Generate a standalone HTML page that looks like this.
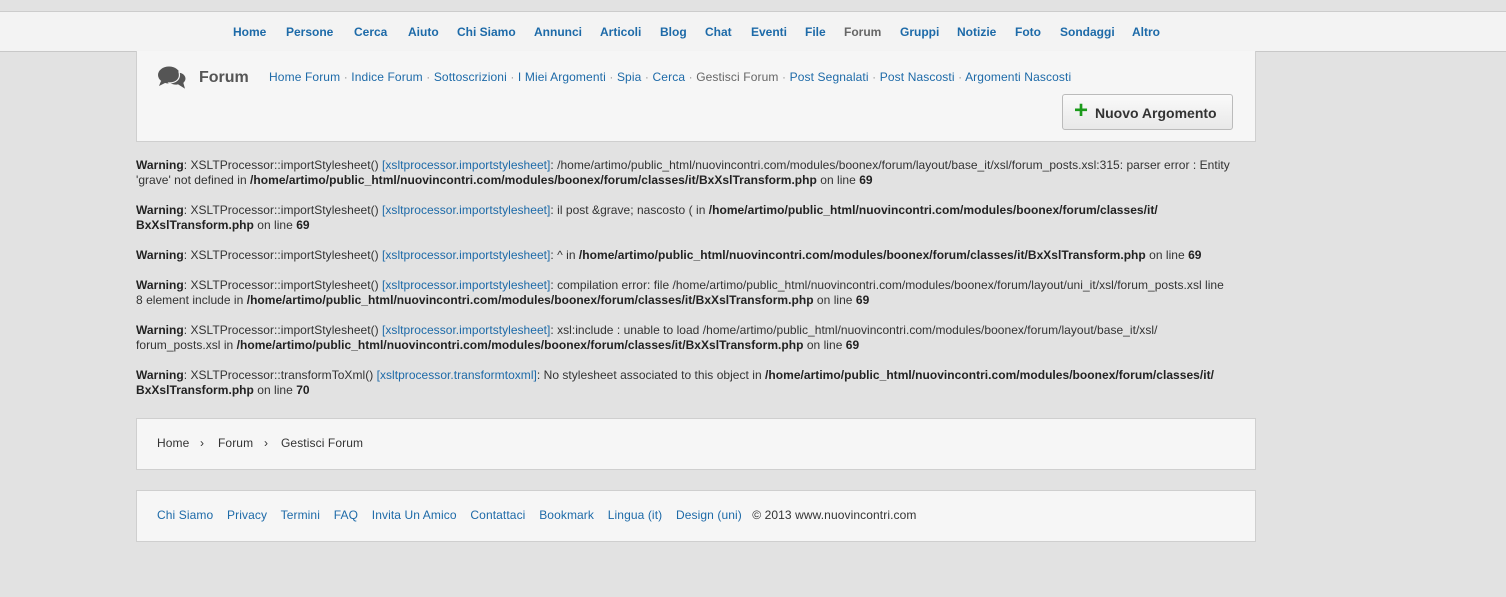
<!DOCTYPE html>
<html><head><meta charset="utf-8"><style>
body{margin:0;width:1506px;height:597px;background:#e2e2e2;font-family:"Liberation Sans",Arial,sans-serif;position:relative;overflow:hidden;color:#333}
a{color:#1d6aa8;text-decoration:none}
.top{position:absolute;left:0;top:11px;width:1506px;height:39px;background:#f3f3f3;border-top:1px solid #ccc;border-bottom:1px solid #c8c8c8}
.nav{position:absolute;top:13px;font-size:12px;font-weight:bold;color:#1d6aa8}
.box{position:absolute;left:136px;width:1118px;background:#f6f6f6;border:1px solid #cfcfcf}
.sub{position:absolute;left:269px;top:70px;font-size:12px;color:#1d6aa8;white-space:nowrap;letter-spacing:0.12px}
.sub .d{color:#999}
.warn{position:absolute;left:136px;font-size:12px;line-height:15px;color:#333;letter-spacing:0.03px;white-space:nowrap}
.warn b{color:#222}
.btn{position:absolute;left:1062px;top:94px;width:171px;height:36px;border:1px solid #bbb;border-radius:3px;background:linear-gradient(#fafafa,#e8e8e8);font-size:14px;font-weight:bold;color:#333;box-sizing:border-box}
.foot{font-size:12px;position:absolute;white-space:nowrap;letter-spacing:0.1px}
.bc span{display:inline-block}
</style></head><body>
<div class="top">
<span class="nav" style="left:233px">Home</span><span class="nav" style="left:286px">Persone</span><span class="nav" style="left:354px">Cerca</span><span class="nav" style="left:408px">Aiuto</span><span class="nav" style="left:457px">Chi Siamo</span><span class="nav" style="left:534px">Annunci</span><span class="nav" style="left:600px">Articoli</span><span class="nav" style="left:660px">Blog</span><span class="nav" style="left:705px">Chat</span><span class="nav" style="left:751px">Eventi</span><span class="nav" style="left:805px">File</span><span class="nav" style="left:844px;color:#666">Forum</span><span class="nav" style="left:900px">Gruppi</span><span class="nav" style="left:957px">Notizie</span><span class="nav" style="left:1015px">Foto</span><span class="nav" style="left:1060px">Sondaggi</span><span class="nav" style="left:1132px">Altro</span>
</div>
<div class="box" style="top:51px;height:90px;border-top:none"></div>
<svg style="position:absolute;left:157px;top:65px" width="31" height="26" viewBox="0 0 31 26"><ellipse cx="12" cy="10" rx="11" ry="8.5" fill="#555"/><path d="M4 16 L2 21 L10 17Z" fill="#555"/><path d="M22 7 C29 8 31 14 27 18 L29 25 L21 20 C17 21 13 19 12 18 C19 18 24 14 22 7Z" fill="#555" stroke="#f6f6f6" stroke-width="1.2"/></svg>
<div style="position:absolute;left:199px;top:69px;font-size:16px;font-weight:bold;color:#555">Forum</div>
<div class="sub"><a>Home Forum</a> <span class="d">·</span> <a>Indice Forum</a> <span class="d">·</span> <a>Sottoscrizioni</a> <span class="d">·</span> <a>I Miei Argomenti</a> <span class="d">·</span> <a>Spia</a> <span class="d">·</span> <a>Cerca</a> <span class="d">·</span> <span style="color:#666">Gestisci Forum</span> <span class="d">·</span> <a>Post Segnalati</a> <span class="d">·</span> <a>Post Nascosti</a> <span class="d">·</span> <a>Argomenti Nascosti</a></div>
<div class="btn"><span style="position:absolute;left:11px;top:4px;color:#1a9a1a;font-size:24px;line-height:24px">+</span><span style="position:absolute;left:32px;top:10px">Nuovo Argomento</span></div>

<div class="warn" style="top:158px"><b>Warning</b>: XSLTProcessor::importStylesheet() <a>[xsltprocessor.importstylesheet]</a>: /home/artimo/public_html/nuovincontri.com/modules/boonex/forum/layout/base_it/xsl/forum_posts.xsl:315: parser error : Entity<br>'grave' not defined in <b>/home/artimo/public_html/nuovincontri.com/modules/boonex/forum/classes/it/BxXslTransform.php</b> on line <b>69</b></div>
<div class="warn" style="top:203px"><b>Warning</b>: XSLTProcessor::importStylesheet() <a>[xsltprocessor.importstylesheet]</a>: il post &amp;grave; nascosto ( in <b>/home/artimo/public_html/nuovincontri.com/modules/boonex/forum/classes/it/<br>BxXslTransform.php</b> on line <b>69</b></div>
<div class="warn" style="top:248px"><b>Warning</b>: XSLTProcessor::importStylesheet() <a>[xsltprocessor.importstylesheet]</a>: ^ in <b>/home/artimo/public_html/nuovincontri.com/modules/boonex/forum/classes/it/BxXslTransform.php</b> on line <b>69</b></div>
<div class="warn" style="top:278px"><b>Warning</b>: XSLTProcessor::importStylesheet() <a>[xsltprocessor.importstylesheet]</a>: compilation error: file /home/artimo/public_html/nuovincontri.com/modules/boonex/forum/layout/uni_it/xsl/forum_posts.xsl line<br>8 element include in <b>/home/artimo/public_html/nuovincontri.com/modules/boonex/forum/classes/it/BxXslTransform.php</b> on line <b>69</b></div>
<div class="warn" style="top:323px"><b>Warning</b>: XSLTProcessor::importStylesheet() <a>[xsltprocessor.importstylesheet]</a>: xsl:include : unable to load /home/artimo/public_html/nuovincontri.com/modules/boonex/forum/layout/base_it/xsl/<br>forum_posts.xsl in <b>/home/artimo/public_html/nuovincontri.com/modules/boonex/forum/classes/it/BxXslTransform.php</b> on line <b>69</b></div>
<div class="warn" style="top:368px"><b>Warning</b>: XSLTProcessor::transformToXml() <a>[xsltprocessor.transformtoxml]</a>: No stylesheet associated to this object in <b>/home/artimo/public_html/nuovincontri.com/modules/boonex/forum/classes/it/<br>BxXslTransform.php</b> on line <b>70</b></div>

<div class="box" style="top:418px;height:50px"></div>
<div class="foot" style="left:157px;top:436px;color:#333"><span style="position:absolute;left:0">Home</span><span style="position:absolute;left:43px">›</span><span style="position:absolute;left:61px">Forum</span><span style="position:absolute;left:107px">›</span><span style="position:absolute;left:124px">Gestisci Forum</span></div>
<div class="box" style="top:490px;height:50px"></div>
<div class="foot" style="left:157px;top:508px"><a>Chi Siamo</a>&nbsp;&nbsp;&nbsp; <a>Privacy</a>&nbsp;&nbsp;&nbsp; <a>Termini</a>&nbsp;&nbsp;&nbsp; <a>FAQ</a>&nbsp;&nbsp;&nbsp; <a>Invita Un Amico</a>&nbsp;&nbsp;&nbsp; <a>Contattaci</a>&nbsp;&nbsp;&nbsp; <a>Bookmark</a>&nbsp;&nbsp;&nbsp; <a>Lingua (it)</a>&nbsp;&nbsp;&nbsp; <a>Design (uni)</a>&nbsp;&nbsp; <span style="color:#333">© 2013 www.nuovincontri.com</span></div>
</body></html>
